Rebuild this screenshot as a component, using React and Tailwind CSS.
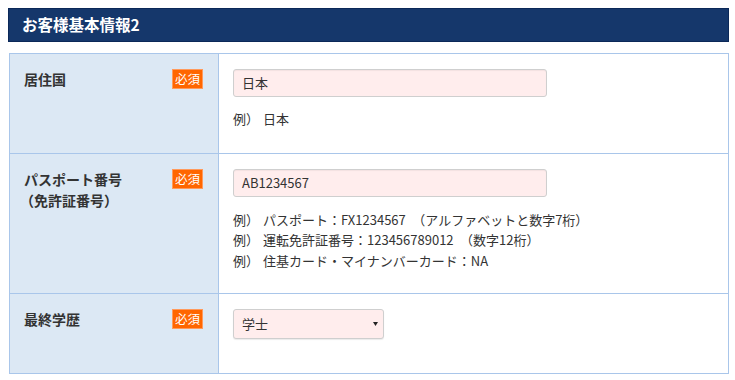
const font = { fontFamily: '"Noto Sans CJK JP", "Noto Sans", sans-serif' };

function Badge() {
  return (
    <span className="flex h-[20px] w-[31px] items-center justify-center border border-[#ff9a5c] bg-[#ff6600] text-[12.5px] leading-none text-white">
      必須
    </span>
  );
}

function Row({ label, children, className }) {
  return (
    <div className={'flex border-t border-[#a9c6ea] first:border-t-0 ' + className}>
      <div className="flex w-[209px] shrink-0 items-start justify-between border-r border-[#a9c6ea] bg-[#dce8f4] pl-[14px] pr-[15px] pt-[15px]">
        <div className="text-[14px] font-bold leading-[21px] text-[#333]">{label}</div>
        <Badge />
      </div>
      <div className="flex-1 pl-[14px] pt-[15px]">{children}</div>
    </div>
  );
}

function Field({ value, w = 'w-[314px]' }) {
  return (
    <div className={`flex h-[28px] items-center rounded-[3px] border border-[#cfcfcf] bg-[#ffeded] px-[8px] text-[13px] text-[#333] shadow-[inset_0_1px_1px_rgba(0,0,0,0.05)] ${w}`}>
      {value}
    </div>
  );
}

function Example({ children }) {
  return (
    <div className="flex h-[20.5px] items-center text-[13px] text-[#333]">
      <span className="w-[30px]">例）</span>
      <span>{children}</span>
    </div>
  );
}

export default function App() {
  return (
    <div className="min-h-screen bg-white pt-[8px]" style={font}>
      <div className="ml-[8px] flex h-[34px] w-[721px] items-center border border-[#0b2858] bg-[#15376b] pl-[13px] text-[15.5px] font-bold text-white">
        お客様基本情報2
      </div>

      <div className="ml-[9px] mt-[11px] w-[720px] border border-[#a9c6ea]">
        <Row label="居住国" className="h-[99px]">
          <Field value="日本" />
          <div className="mt-[11px]">
            <Example>日本</Example>
          </div>
        </Row>

        <Row
          label={
            <>
              パスポート番号
              <br />
              <span className="-ml-[4px]">（免許証番号）</span>
            </>
          }
          className="h-[140px]"
        >
          <Field value="AB1234567" />
          <div className="mt-[12px]">
            <Example>パスポート：FX1234567　（アルファベットと数字7桁）</Example>
            <Example>運転免許証番号：123456789012　（数字12桁）</Example>
            <Example>住基カード・マイナンバーカード：NA</Example>
          </div>
        </Row>

        <Row label="最終学歴" className="h-[80px]">
          <div className="flex h-[30px] w-[151px] items-center justify-between rounded-[3px] border border-[#cfcfcf] bg-[#ffeded] pl-[8px] pr-[5px] text-[13px] text-[#333] shadow-[0_1px_1px_rgba(0,0,0,0.08)]">
            <span>学士</span>
            <svg width="5" height="4" viewBox="0 0 5 4">
              <path d="M0 0h5L2.5 4z" fill="#222" />
            </svg>
          </div>
        </Row>
      </div>
    </div>
  );
}
